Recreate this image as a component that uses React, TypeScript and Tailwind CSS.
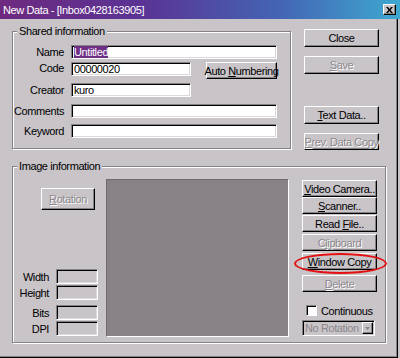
import React from 'react'

const font = "font-['Liberation_Sans',Arial,sans-serif]"

interface BtnProps {
  children: React.ReactNode
  disabled?: boolean
  className?: string
}

function Btn({ children, disabled = false, className = '' }: BtnProps) {
  return (
    <button
      type="button"
      className={`flex items-center justify-center whitespace-nowrap border border-t-white border-l-white border-r-black border-b-black bg-[#c8c4c8] shadow-[inset_-1px_-1px_0_#848284] text-[11px] leading-[12px] tracking-[-0.4px] ${
        disabled ? 'text-[#8c888c] [text-shadow:1px_1px_0_#fff]' : 'text-black'
      } ${className}`}
    >
      <span>{children}</span>
    </button>
  )
}

function Field({ children, className = '', gray = false }: { children?: React.ReactNode; className?: string; gray?: boolean }) {
  return (
    <div
      className={`flex items-center whitespace-nowrap border border-t-[#848284] border-l-[#848284] border-r-white border-b-white shadow-[inset_1px_1px_0_#000,inset_-1px_-1px_0_#dcd8dc] px-[2px] ${
        gray ? 'bg-[#c8c4c8]' : 'bg-white'
      } ${className}`}
    >
      {children}
    </div>
  )
}

function Row({ label, children, className = '' }: { label: string; children: React.ReactNode; className?: string }) {
  return (
    <div className={`flex items-center gap-[7px] ${className}`}>
      <span className="w-[51px] text-right whitespace-nowrap">{label}</span>
      {children}
    </div>
  )
}

function InfoRow({ label, className = '' }: { label: string; className?: string }) {
  return (
    <div className={`flex items-center gap-[7px] ${className}`}>
      <span className="w-[36px] text-right">{label}</span>
      <Field gray className="w-[42px] h-[15px]" />
    </div>
  )
}

const groupBox = 'border border-[#848284] shadow-[inset_1px_1px_0_#fff,1px_1px_0_#fff]'
const legend = 'ml-[4px] px-[2px] leading-[12px] bg-[#c8c4c8]'

export default function App() {
  return (
    <div
      className={`relative w-[400px] h-[358px] bg-[#c8c4c8] text-[11px] leading-[12px] tracking-[-0.4px] text-black ${font} flex flex-col overflow-hidden`}
    >
      {/* title bar */}
      <div className="h-[19px] shrink-0 flex items-center justify-between pl-[3px] pr-[4px] bg-[linear-gradient(90deg,#6e2a80_0%,#5a3394_35%,#4465b4_70%,#3ea8d0_100%)] text-white">
        <span>New Data - [Inbox0428163905]</span>
        <button
          type="button"
          className="w-[13px] h-[11px] flex items-center justify-center bg-[#c8c4c8] border border-t-white border-l-white border-r-black border-b-black shadow-[inset_-1px_-1px_0_#848284]"
        >
          <svg width="7" height="6" viewBox="0 0 7 6">
            <path d="M0 0h2l1.5 2L5 0h2L4.5 3 7 6H5L3.5 4 2 6H0l2.5-3z" fill="#000" />
          </svg>
        </button>
      </div>

      <div className="flex-1 w-[398px] flex flex-col border-r border-b border-black shadow-[inset_-1px_-1px_0_#848284]">
        {/* top section */}
        <div className="flex items-start">
          <fieldset className={`ml-[12px] mt-[6px] w-[279px] h-[124px] ${groupBox}`}>
            <legend className={legend}>Shared information</legend>
            <div className="flex flex-col">
              <Row label="Name" className="mt-[8px] h-[14px]">
                <Field className="w-[206px] h-[14px]">
                  <span className="bg-[#6e2f86] text-white">Untitled</span>
                </Field>
              </Row>
              <Row label="Code" className="mt-[3px] h-[17px] items-start">
                <Field className="w-[120px] h-[14px]">00000020</Field>
                <Btn className="ml-[8px] w-[71px] h-[17px]">
                  Auto <u>N</u>umbering
                </Btn>
              </Row>
              <Row label="Creator" className="mt-[4px] h-[14px]">
                <Field className="w-[120px] h-[14px]">kuro</Field>
              </Row>
              <Row label="Comments" className="mt-[7px] h-[14px]">
                <Field className="w-[206px] h-[14px]" />
              </Row>
              <Row label="Keyword" className="mt-[6px] h-[14px]">
                <Field className="w-[206px] h-[14px]" />
              </Row>
            </div>
          </fieldset>

          <div className="ml-[13px] flex flex-col">
            <Btn className="mt-[10px] w-[75px] h-[18px]">Close</Btn>
            <Btn disabled className="mt-[9px] w-[75px] h-[18px]">
              <u>S</u>ave
            </Btn>
            <Btn className="mt-[32px] w-[75px] h-[18px]">
              <u>T</u>ext Data..
            </Btn>
            <Btn disabled className="mt-[9px] w-[75px] h-[17px]">
              <u>P</u>rev. Data Copy
            </Btn>
          </div>
        </div>

        {/* image section */}
        <fieldset className={`ml-[12px] mt-[10px] w-[374px] h-[183px] ${groupBox}`}>
          <legend className={legend}>Image information</legend>
          <div className="flex items-start">
            <div className="w-[93px] flex flex-col">
              <Btn disabled className="ml-[28px] mt-[16px] w-[54px] h-[22px]">
                <u>R</u>otation
              </Btn>
              <InfoRow label="Width" className="mt-[59px]" />
              <InfoRow label="Height" className="mt-[1px]" />
              <InfoRow label="Bits" className="mt-[5px]" />
              <InfoRow label="DPI" className="mt-[1px]" />
            </div>

            <div className="mt-[7px] w-[183px] h-[158px] bg-[#868286] border border-t-[#6e6a6e] border-l-[#6e6a6e] border-r-white border-b-white" />

            <div className="ml-[13px] flex flex-col">
              <Btn className="mt-[8px] w-[75px] h-[17px]">
                <u>V</u>ideo Camera..
              </Btn>
              <Btn className="w-[75px] h-[17px]">
                <u>S</u>canner..
              </Btn>
              <Btn className="mt-[1px] w-[75px] h-[17px]">
                Read <u>F</u>ile..
              </Btn>
              <Btn disabled className="mt-[2px] w-[75px] h-[17px]">
                C<u>l</u>ipboard
              </Btn>
              <Btn className="mt-[2px] w-[75px] h-[17px]">
                <u>W</u>indow Copy
              </Btn>
              <Btn disabled className="mt-[5px] w-[75px] h-[17px]">
                <u>D</u>elete
              </Btn>
              <div className="mt-[12px] h-[13px] flex items-center gap-[4px] pl-[4px]">
                <div className="w-[11px] h-[11px] bg-white border border-t-[#848284] border-l-[#848284] border-r-white border-b-white shadow-[inset_1px_1px_0_#000]" />
                <span>Continuous</span>
              </div>
              <div className="mt-[3px] w-[73px] h-[16px] flex items-center justify-between whitespace-nowrap border border-t-[#848284] border-l-[#848284] border-r-white border-b-white shadow-[inset_1px_1px_0_#000] pl-[2px] pr-[1px] text-[#8c888c]">
                <span>No Rotation</span>
                <div className="w-[11px] h-[12px] shrink-0 flex items-center justify-center border border-t-white border-l-white border-r-black border-b-black shadow-[inset_-1px_-1px_0_#848284]">
                  <svg width="5" height="3" viewBox="0 0 5 3">
                    <path d="M0 0h5L2.5 3z" fill="#8c888c" />
                  </svg>
                </div>
              </div>
            </div>
          </div>
        </fieldset>
      </div>

      {/* red highlight ring */}
      <div className="absolute left-[294px] top-[253px] w-[93px] h-[21px] rounded-[50%] border-2 border-[#e41010] pointer-events-none" />
    </div>
  )
}
